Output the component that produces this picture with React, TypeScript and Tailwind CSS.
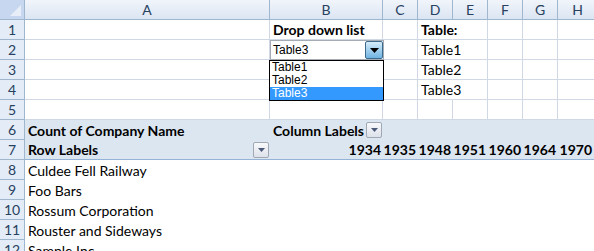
import React from "react";

const cols = [
  { name: "A", w: "w-[245px]" },
  { name: "B", w: "w-[113px]" },
  { name: "C", w: "w-[35px]" },
  { name: "D", w: "w-[35px]" },
  { name: "E", w: "w-[35px]" },
  { name: "F", w: "w-[35px]" },
  { name: "G", w: "w-[35px]" },
  { name: "H", w: "w-[40px]" },
];

const years = ["1934", "1935", "1948", "1951", "1960", "1964", "1970"];
const companies = [
  "Culdee Fell Railway",
  "Foo Bars",
  "Rossum Corporation",
  "Rouster and Sideways",
  "Sample Inc",
];

const cellFont = "font-['Lato','Liberation_Sans',sans-serif] text-[14px] text-black whitespace-nowrap";
const headFont = "font-['Lato','Liberation_Sans',sans-serif] text-[14px] text-[#27415f]";

const RowHead = ({ n }: { n: number }) => (
  <div
    className={`w-[25px] h-[20px] shrink-0 flex items-center justify-center border-r border-b border-[#9eb6ce] bg-[#e4ecf7] ${headFont}`}
  >
    {n}
  </div>
);

const PivotButton = () => (
  <div className="w-[16px] h-[16px] shrink-0 border border-[#a0a8b4] rounded-[2px] bg-gradient-to-b from-[#f8f9fb] to-[#dde2ea] flex items-center justify-center">
    <svg width="7" height="4" viewBox="0 0 7 4">
      <path d="M0 0 L7 0 L3.5 4 Z" fill="#4a5a78" />
    </svg>
  </div>
);

const Cell = ({
  w,
  children,
  className = "",
}: {
  w: string;
  children?: React.ReactNode;
  className?: string;
}) => (
  <div
    className={`${w} h-[20px] shrink-0 border-r border-b border-[#d0d7e5] flex items-center px-[3px] ${cellFont} ${className}`}
  >
    {children}
  </div>
);

export default function App() {
  const topRows: Record<number, Record<string, React.ReactNode>> = {
    1: { B: <span className="font-bold">Drop down list</span>, D: <span className="font-bold">Table:</span> },
    2: { D: "Table1" },
    3: { D: "Table2" },
    4: { D: "Table3" },
    5: {},
  };

  return (
    <div className="relative w-[594px] h-[251px] overflow-hidden bg-white">
      {/* column headers */}
      <div className="flex">
        <div className="w-[25px] h-[20px] shrink-0 border-r border-b border-[#9eb6ce] bg-[#c6d7ef] relative">
          <svg className="absolute right-[3px] bottom-[3px]" width="11" height="11" viewBox="0 0 11 11">
            <path d="M11 0 L11 11 L0 11 Z" fill="#e8eef8" />
          </svg>
        </div>
        {cols.map((c) => (
          <div
            key={c.name}
            className={`${c.w} h-[20px] shrink-0 border-r border-b border-[#9eb6ce] bg-gradient-to-b from-[#f1f5fb] to-[#dbe5f2] flex items-center justify-center ${headFont}`}
          >
            {c.name}
          </div>
        ))}
      </div>

      {[1, 2, 3, 4, 5].map((r) => (
        <div key={r} className="flex">
          <RowHead n={r} />
          {cols.map((c) => (
            <Cell
              key={c.name}
              w={c.w}
              className={c.name === "D" && r < 5 ? "border-r-transparent relative z-10" : ""}
            >
              {topRows[r][c.name]}
            </Cell>
          ))}
        </div>
      ))}

      {/* pivot header row 6 */}
      <div className="flex">
        <RowHead n={6} />
        <div className="flex flex-1 bg-[#dce6f1] h-[20px]">
          <div className={`w-[245px] shrink-0 flex items-center px-[3px] font-bold ${cellFont}`}>
            Count of Company Name
          </div>
          <div className={`w-[113px] shrink-0 flex items-center justify-between pl-[3px] pr-[1px] font-bold ${cellFont}`}>
            Column Labels
            <PivotButton />
          </div>
        </div>
      </div>

      {/* pivot header row 7 */}
      <div className="flex">
        <RowHead n={7} />
        <div className="flex flex-1 bg-[#dce6f1] h-[20px] border-b border-[#95b3d7]">
          <div className={`w-[245px] shrink-0 flex items-center justify-between pl-[3px] pr-[1px] font-bold ${cellFont}`}>
            Row Labels
            <PivotButton />
          </div>
          {years.map((y, i) => (
            <div
              key={y}
              className={`${i === 6 ? "w-[36px]" : cols[i + 1].w} shrink-0 flex items-center justify-end pr-[2px] font-bold ${cellFont}`}
            >
              {y}
            </div>
          ))}
        </div>
      </div>

      {companies.map((name, i) => (
        <div key={name} className="flex">
          <RowHead n={8 + i} />
          <div className={`flex-1 h-[20px] flex items-center px-[3px] ${cellFont}`}>{name}</div>
        </div>
      ))}

      {/* combo box overlay */}
      <div className="absolute left-[270px] top-[40px] w-[114px] h-[20px] bg-white border border-[#a5acb5] flex items-center justify-between pl-[2px] font-['Liberation_Sans',sans-serif] text-[12px] text-black">
        Table3
        <div className="w-[18px] h-[18px] border border-[#3c6a8c] rounded-[2px] bg-gradient-to-b from-[#d6ecfa] to-[#6fb4e2] flex items-center justify-center">
          <svg width="9" height="5" viewBox="0 0 9 5">
            <path d="M0 0 L9 0 L4.5 5 Z" fill="#000" />
          </svg>
        </div>
      </div>
      <div className="absolute left-[269px] top-[60px] w-[115px] h-[41px] bg-white border border-black font-['Liberation_Sans',sans-serif] text-[12px] text-black leading-[13px]">
        <div className="h-[13px] pl-[2px]">Table1</div>
        <div className="h-[13px] pl-[2px]">Table2</div>
        <div className="h-[13px] pl-[2px] bg-[#3399ff] text-white">Table3</div>
      </div>
    </div>
  );
}
